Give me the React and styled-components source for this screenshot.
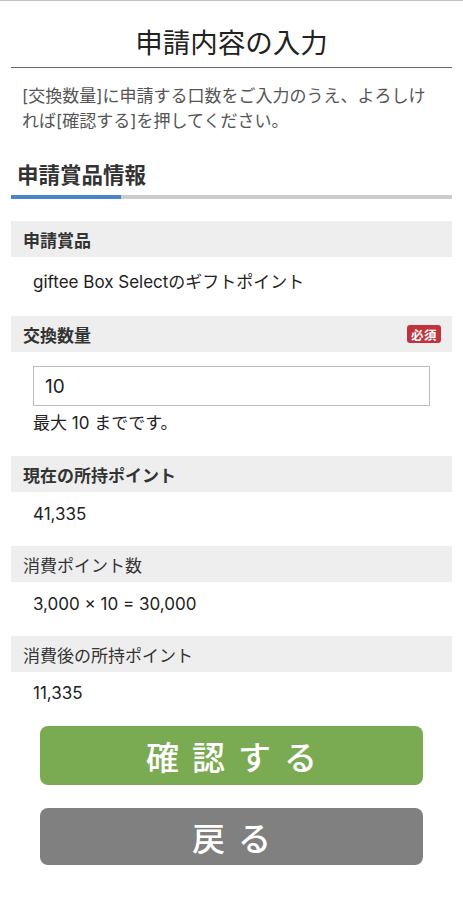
import React from "react";
import styled, { createGlobalStyle } from "styled-components";

const Global = createGlobalStyle`
  html, body { margin: 0; padding: 0; background: #fff; }
  body {
    font-family: Inter, "Noto Sans CJK JP", sans-serif;
    color: #222;
    -webkit-font-smoothing: antialiased;
  }
  * { box-sizing: border-box; }
`;

const Page = styled.div`
  width: 463px;
  border-top: 1px solid #c4c4c4;
  padding: 0 11px 34px;
`;

const Title = styled.h1`
  margin: 21px 0 0;
  padding-bottom: 6px;
  font-family: "Noto Sans CJK JP", sans-serif;
  font-size: 27.5px;
  line-height: 39px;
  font-weight: 400;
  text-align: center;
  color: #222;
  border-bottom: 1px solid #666;
`;

const Intro = styled.p`
  margin: 16px 0 0;
  padding: 0 14px 0 11px;
  font-size: 17px;
  line-height: 25px;
  color: #555;
`;

const SectionHeading = styled.h2`
  margin: 26px 0 0;
  padding-left: 6px;
  font-size: 21.5px;
  line-height: 30px;
  font-weight: 700;
  color: #333;
`;

const Bar = styled.div`
  margin-top: 5px;
  height: 4px;
  background: #cccccc;
  display: flex;
`;

const BarFill = styled.div`
  width: 110px;
  background: #4886c6;
`;

const Field = styled.div`
  margin-top: ${(p) => p.$gap}px;
`;

const Label = styled.div`
  display: flex;
  align-items: center;
  justify-content: space-between;
  height: 36px;
  padding: 0 12px;
  background: #eeeeee;
  font-size: 17px;
  font-weight: ${(p) => (p.$bold ? 700 : 400)};
  color: #333;
`;

const Badge = styled.span`
  display: inline-flex;
  align-items: center;
  justify-content: center;
  height: 18px;
  padding: 0 4px;
  margin-right: -1px;
  border-radius: 3px;
  background: #c0333d;
  color: #fff;
  font-size: 12.5px;
  font-weight: 700;
  letter-spacing: 0.5px;
`;

const Value = styled.div`
  padding: ${(p) => p.$top}px 22px 0;
  font-size: 17px;
  line-height: 24px;
  color: #222;
`;

const InputWrap = styled.div`
  padding: 14px 22px 0;
`;

const Input = styled.input`
  display: block;
  width: 100%;
  height: 40px;
  padding: 0 11px;
  border: 1px solid #bdbdbd;
  border-radius: 0;
  font-family: inherit;
  font-size: 19px;
  color: #222;
  outline: none;
`;

const Note = styled.div`
  padding: 5px 0 0;
  font-size: 17px;
  line-height: 24px;
  color: #222;
`;

const Buttons = styled.div`
  display: flex;
  flex-direction: column;
  align-items: center;
  gap: 23px;
  margin-top: 21px;
`;

const Button = styled.button`
  width: 383px;
  height: ${(p) => p.$h}px;
  border: none;
  border-radius: 8px;
  background: ${(p) => p.$bg};
  color: #fff;
  font-family: "Noto Sans CJK JP", sans-serif;
  font-size: 33px;
  font-weight: 500;
  letter-spacing: 13px;
  padding: 0 0 0 13px;
  display: flex;
  align-items: center;
  justify-content: center;
  cursor: pointer;
`;

export default function App() {
  return (
    <>
      <Global />
      <Page>
        <Title>申請内容の入力</Title>
        <Intro>
          [交換数量]に申請する口数をご入力のうえ、よろしければ[確認する]を押してください。
        </Intro>
        <SectionHeading>申請賞品情報</SectionHeading>
        <Bar>
          <BarFill />
        </Bar>

        <Field $gap={22}>
          <Label $bold>申請賞品</Label>
          <Value $top={13}>giftee Box Selectのギフトポイント</Value>
        </Field>

        <Field $gap={22}>
          <Label $bold>
            交換数量
            <Badge>必須</Badge>
          </Label>
          <InputWrap>
            <Input type="text" defaultValue="10" />
            <Note>最大 10 までです。</Note>
          </InputWrap>
        </Field>

        <Field $gap={21}>
          <Label $bold>現在の所持ポイント</Label>
          <Value $top={10}>41,335</Value>
        </Field>

        <Field $gap={20}>
          <Label>消費ポイント数</Label>
          <Value $top={10}>3,000 × 10 = 30,000</Value>
        </Field>

        <Field $gap={20}>
          <Label>消費後の所持ポイント</Label>
          <Value $top={9}>11,335</Value>
        </Field>

        <Buttons>
          <Button $bg="#7aab52" $h={59}>確認する</Button>
          <Button $bg="#808080" $h={57}>戻る</Button>
        </Buttons>
      </Page>
    </>
  );
}
